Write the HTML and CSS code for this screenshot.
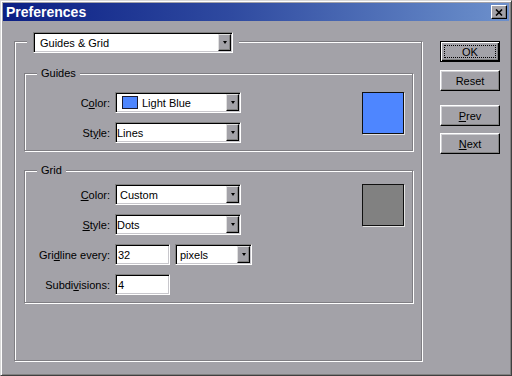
FILE: index.html
```html
<!DOCTYPE html>
<html>
<head>
    <title>Preferences</title>
    <meta charset="UTF-8">
    <link rel="stylesheet" href="styles.css">
</head>
<body>
    <div class="window">
        <div class="titlebar">
            <span class="title">Preferences</span>
            <span class="close">
                <svg width="8" height="7" viewBox="0 0 8 7"><path d="M1 0.5 L7 6.5 M7 0.5 L1 6.5" stroke="#000" stroke-width="1.6" fill="none"/></svg>
            </span>
        </div>

        <div class="client">
            <div class="panel">
                <div class="panel-head">
                    <div class="select wide">
                        <span class="value pad-5">Guides &amp; Grid</span>
                        <span class="arrow"></span>
                    </div>
                </div>

                <div class="group guides">
                    <div class="group-title">Guides</div>
                    <div class="group-body">
                        <div class="rows">
                            <div class="row">
                                <label>C<u>o</u>lor:</label>
                                <div class="select">
                                    <span class="value pad-5"><span class="chip"></span>Light Blue</span>
                                    <span class="arrow"></span>
                                </div>
                            </div>
                            <div class="row">
                                <label>St<u>y</u>le:</label>
                                <div class="select">
                                    <span class="value">Lines</span>
                                    <span class="arrow"></span>
                                </div>
                            </div>
                        </div>
                        <div class="swatch blue"></div>
                    </div>
                </div>

                <div class="group grid">
                    <div class="group-title">Grid</div>
                    <div class="group-body">
                        <div class="rows">
                            <div class="row">
                                <label><u>C</u>olor:</label>
                                <div class="select">
                                    <span class="value pad-3">Custom</span>
                                    <span class="arrow"></span>
                                </div>
                            </div>
                            <div class="row">
                                <label><u>S</u>tyle:</label>
                                <div class="select">
                                    <span class="value">Dots</span>
                                    <span class="arrow"></span>
                                </div>
                            </div>
                            <div class="row">
                                <label>Gri<u>d</u>line every:</label>
                                <div class="field">32</div>
                                <div class="select unit">
                                    <span class="value pad-3">pixels</span>
                                    <span class="arrow"></span>
                                </div>
                            </div>
                            <div class="row">
                                <label>Subdi<u>v</u>isions:</label>
                                <div class="field">4</div>
                            </div>
                        </div>
                        <div class="swatch gray"></div>
                    </div>
                </div>
            </div>

            <div class="buttons">
                <div class="btn default"><span class="focus">OK</span></div>
                <div class="btn reset">Reset</div>
                <div class="btn prev"><span><u>P</u>rev</span></div>
                <div class="btn next"><span><u>N</u>ext</span></div>
            </div>
        </div>
    </div>
</body>
</html>
```

FILE: styles.css
```css
body {
    margin: 0;
    font-family: "Liberation Sans", Arial, sans-serif;
    font-size: 11px;
    color: #000;
}

.window {
    width: 512px;
    height: 376px;
    box-sizing: border-box;
    background: #a3a2a8;
    border: 1px solid;
    border-color: #d8d8d8 #404040 #404040 #d8d8d8;
    box-shadow: inset 1px 1px #fff, inset -1px -1px #808080;
    padding: 2px;
}

.titlebar {
    height: 18px;
    display: flex;
    align-items: center;
    justify-content: space-between;
    padding: 0 2px 0 3px;
    background: linear-gradient(to right, #0b1f84, #2f4aa0 45%, #6184c4 90%, #6d90cc);
}

.title {
    color: #fff;
    font-weight: bold;
    font-size: 14px;
    line-height: 18px;
}

.close {
    width: 16px;
    height: 14px;
    box-sizing: border-box;
    background: #a3a2a8;
    border: 1px solid;
    border-color: #fff #000 #000 #fff;
    box-shadow: inset -1px -1px #808080;
    display: flex;
    align-items: center;
    justify-content: center;
}

.client {
    display: flex;
    align-items: flex-start;
    padding: 20px 0 0 11px;
}

.panel {
    width: 408px;
    height: 320px;
    box-sizing: border-box;
    border: 1px solid #7f7e83;
    box-shadow: inset 1px 1px #fff, 1px 1px #fff;
    padding: 0 8px 0 9px;
}

.panel-head {
    width: fit-content;
    margin: -10px 0 0 3px;
    padding: 0 6px;
    background: #a3a2a8;
}

.group {
    border: 1px solid #7f7e83;
    box-shadow: inset 1px 1px #fff, 1px 1px #fff;
    padding-bottom: 7px;
}

.guides {
    margin-top: 20px;
}

.grid {
    margin-top: 19px;
}

.group-title {
    width: fit-content;
    margin: -7px 0 0 12px;
    padding: 0 4px;
    line-height: 13px;
    background: #a3a2a8;
}

.group-body {
    display: flex;
    justify-content: space-between;
    align-items: flex-start;
    padding-right: 8px;
}

.guides .group-body {
    margin-top: 12px;
}

.grid .group-body {
    margin-top: 7px;
}

.rows {
    display: flex;
    flex-direction: column;
    gap: 9px;
}

.row {
    display: flex;
    align-items: center;
    gap: 5px;
    height: 21px;
}

.row label {
    width: 85px;
    text-align: right;
}

.select,
.field {
    box-sizing: border-box;
    height: 21px;
    background: #fff;
    border: 1px solid;
    border-color: #808080 #fff #fff #808080;
    box-shadow: inset 1px 1px #000, inset -1px -1px #c8c7cc;
    padding: 1px;
}

.select {
    width: 126px;
    display: flex;
}

.select.wide {
    width: 200px;
}

.select.unit {
    width: 77px;
}

.field {
    width: 55px;
    display: flex;
    align-items: center;
    padding-left: 2px;
}

.value {
    flex: 1;
    display: flex;
    align-items: center;
    white-space: nowrap;
}

.pad-3 {
    padding-left: 3px;
}

.pad-5 {
    padding-left: 5px;
}

.chip {
    width: 16px;
    height: 13px;
    box-sizing: border-box;
    border: 1px solid #1c1c30;
    background: #4e86ff;
    margin-right: 4px;
}

.arrow {
    width: 13px;
    box-sizing: border-box;
    background: #a3a2a8;
    border: 1px solid;
    border-color: #e0e0e0 #000 #000 #e0e0e0;
    box-shadow: inset -1px -1px #808080;
    display: flex;
    align-items: center;
    justify-content: center;
}

.arrow::before {
    content: '';
    border-left: 2px solid transparent;
    border-right: 2px solid transparent;
    border-top: 3px solid #000;
}

.swatch {
    width: 42px;
    height: 42px;
    box-sizing: border-box;
    border: 1px solid #101010;
    box-shadow: 1px 1px #e4e4e4;
}

.swatch.blue {
    background: #4e86ff;
}

.swatch.gray {
    background: #818181;
}

.buttons {
    display: flex;
    flex-direction: column;
    margin-left: 18px;
}

.btn {
    width: 60px;
    height: 21px;
    box-sizing: border-box;
    border: 1px solid;
    border-color: #fff #000 #000 #fff;
    box-shadow: inset -1px -1px #808080, inset 1px 1px #d0d0d4;
    display: flex;
    align-items: center;
    justify-content: center;
}

.btn.default {
    border-color: #000;
    box-shadow: inset 1px 1px #fff, inset -1px -1px #000, inset -2px -2px #808080;
}

.focus {
    flex: 1;
    align-self: stretch;
    margin: 3px;
    border: 1px dotted #000;
    display: flex;
    align-items: center;
    justify-content: center;
}

.reset {
    margin-top: 8px;
}

.prev {
    margin-top: 14px;
}

.next {
    margin-top: 7px;
}
```
